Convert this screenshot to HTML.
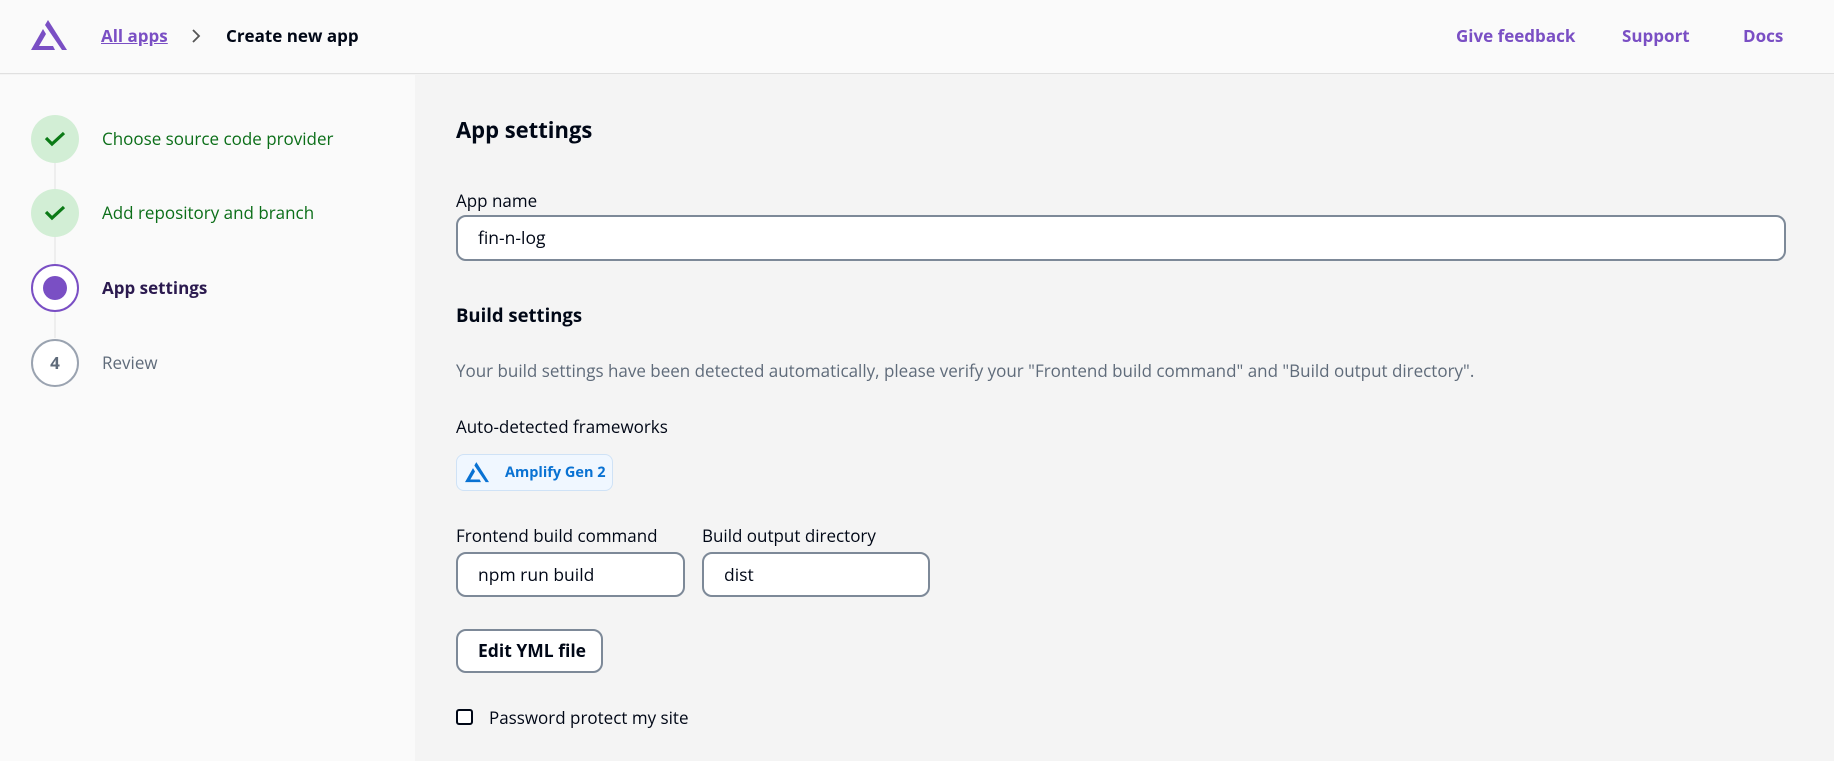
<!DOCTYPE html>
<html><head><meta charset="utf-8"><style>
*{box-sizing:border-box;margin:0;padding:0}
body{width:1834px;height:761px;overflow:hidden;font-family:"Open Sans","Liberation Sans",sans-serif;background:#f4f4f4;position:relative;color:#000716;font-size:17px}
.a{position:absolute;white-space:nowrap}
.hdr{position:absolute;left:0;top:0;width:1834px;height:74px;background:#fafafa;border-bottom:1px solid #e0e0e0}
.side{position:absolute;left:0;top:75px;width:415px;height:686px;background:#fafafa}
.sb{position:absolute;left:1822px;top:75px;width:12px;height:686px;background:#f4f4f4}
.circ{position:absolute;left:31px;width:48px;height:48px;border-radius:50%}
.inp{position:absolute;background:#fff;border:2px solid #7d8998;border-radius:10px;padding-left:20px;display:flex;align-items:center;font-size:17.5px}
</style></head><body>
<div class="hdr"></div>
<svg class="a" style="left:31px;top:20px" width="36" height="31" viewBox="0 0 36 31"><path d="M0 30 L12 9 L15 14 L8 26 L22 26 L24 30 Z" fill="#7a4fc4"/><path d="M17 0 L36 30 L31 30 L14 5 Z" fill="#7a4fc4"/></svg>
<div class="a" style="left:101px;top:24px;color:#7a4fc4;font-weight:700;text-decoration:underline">All apps</div>
<svg class="a" style="left:190px;top:28px" width="12" height="16"><path d="M3 2 L9 8 L3 14" stroke="#555" stroke-width="1.8" fill="none"/></svg>
<div class="a" style="left:226px;top:24px;font-weight:700">Create new app</div>
<div class="a" style="left:1456px;top:24px;color:#7a4fc4;font-weight:700">Give feedback</div>
<div class="a" style="left:1622px;top:24px;color:#7a4fc4;font-weight:700">Support</div>
<div class="a" style="left:1743px;top:24px;color:#7a4fc4;font-weight:700">Docs</div>

<div class="side"></div>
<div class="a" style="left:54px;top:163px;width:2px;height:175px;background:#eee"></div>
<div class="circ" style="top:115px;background:#d2eed5"></div>
<svg class="a" style="left:44px;top:130px" width="22" height="18"><path d="M2 8 L8 14 L20 3" stroke="#0b7a16" stroke-width="3.2" fill="none"/></svg>
<div class="a" style="left:102px;top:127px;color:#0b6e18">Choose source code provider</div>
<div class="circ" style="top:189px;background:#d2eed5"></div>
<svg class="a" style="left:44px;top:204px" width="22" height="18"><path d="M2 8 L8 14 L20 3" stroke="#0b7a16" stroke-width="3.2" fill="none"/></svg>
<div class="a" style="left:102px;top:201px;color:#0b6e18">Add repository and branch</div>
<div class="circ" style="top:264px;border:2px solid #7a4fc4;background:#fff"></div>
<div class="a" style="left:43px;top:276px;width:24px;height:24px;border-radius:50%;background:#7a4fc4"></div>
<div class="a" style="left:102px;top:276px;font-weight:700;color:#2b1a4f">App settings</div>
<div class="circ" style="top:339px;border:2px solid #9aa3b0;background:#fff;text-align:center;line-height:44px;font-weight:700;color:#5f6b7a">4</div>
<div class="a" style="left:102px;top:351px;color:#5f6b7a">Review</div>

<div class="sb"></div>
<div class="a" style="left:456px;top:115px;font-size:22px;font-weight:700">App settings</div>
<div class="a" style="left:456px;top:189px">App name</div>
<div class="inp" style="left:456px;top:215px;width:1330px;height:46px">fin-n-log</div>
<div class="a" style="left:456px;top:303px;font-size:18.5px;font-weight:700">Build settings</div>
<div class="a" style="left:456px;top:359px;color:#5f6b7a;font-size:17px">Your build settings have been detected automatically, please verify your "Frontend build command" and "Build output directory".</div>
<div class="a" style="left:456px;top:415px">Auto-detected frameworks</div>
<div class="a" style="left:456px;top:454px;width:157px;height:37px;background:#f0f7ff;border:1px solid #cfe2f6;border-radius:8px"></div>
<svg class="a" style="left:465px;top:462px" width="24" height="21" viewBox="0 0 36 31"><path d="M0 30 L12 9 L15 14 L8 26 L22 26 L24 30 Z" fill="#0972d3"/><path d="M17 0 L36 30 L31 30 L14 5 Z" fill="#0972d3"/></svg>
<div class="a" style="left:505px;top:463px;color:#0972d3;font-weight:700;font-size:14.5px">Amplify Gen 2</div>
<div class="a" style="left:456px;top:524px">Frontend build command</div>
<div class="a" style="left:702px;top:524px">Build output directory</div>
<div class="inp" style="left:456px;top:552px;width:229px;height:45px">npm run build</div>
<div class="inp" style="left:702px;top:552px;width:228px;height:45px">dist</div>
<div class="inp" style="left:456px;top:629px;width:147px;height:44px;font-weight:700">Edit YML file</div>
<div class="a" style="left:456px;top:709px;width:17px;height:16px;border:2px solid #000716;border-radius:3px;background:#fff"></div>
<div class="a" style="left:489px;top:706px">Password protect my site</div>
</body></html>
